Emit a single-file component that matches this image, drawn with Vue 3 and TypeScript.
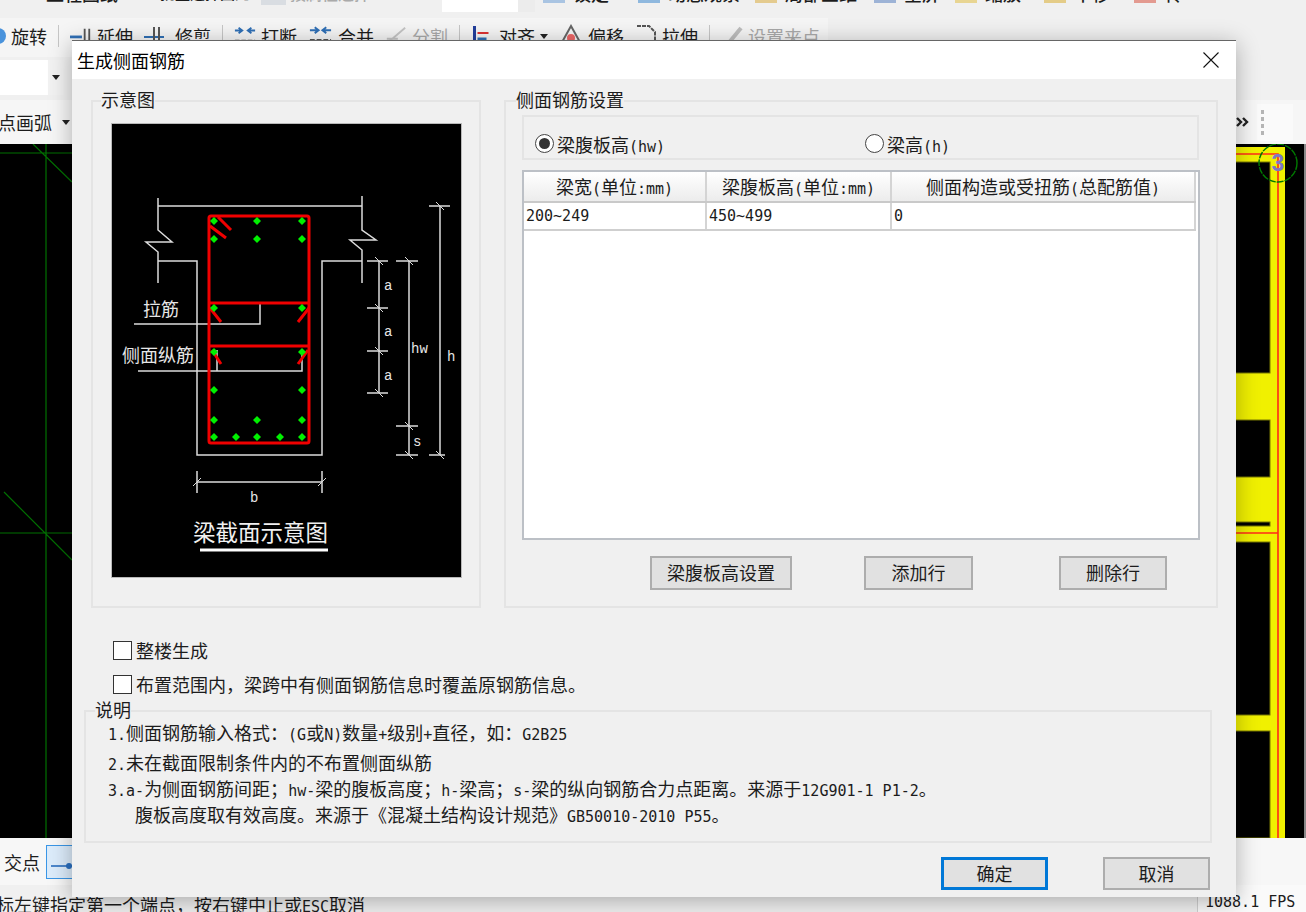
<script setup lang="ts">
const topRight = [
  { label: '锁定', color: '#a9c4e2', width: 95 },
  { label: '动态观察', color: '#8fb8de', width: 117 },
  { label: '局部三维', color: '#e4cb8f', width: 119 },
  { label: '全屏', color: '#9db3d6', width: 81 },
  { label: '缩放', color: '#e8d592', width: 89 },
  { label: '平移', color: '#e4cc88', width: 90 },
  { label: '屏幕旋转', color: '#e39a90', width: 100 },
]

const greenDots = [
  [214, 221], [257, 221], [302, 221],
  [214, 239], [257, 239], [302, 239],
  [214, 308], [302, 308],
  [214, 352], [302, 352],
  [214, 390], [302, 390],
  [214, 420], [257, 420], [302, 420],
  [214, 437], [236, 437], [257, 437], [280, 437], [302, 437],
]

const whitePaths = [
  'M158 198V230L172 242H146L158 252V283',
  'M158 206H362',
  'M362 196V230L376 240H350L362 250V283',
  'M158 261H197V455H322V261H362',
  'M134 324H260V303',
  'M138 371H302V352',
  'M217 350V371',
  'M379 261V393',
  'M367 261H388M367 308H388M367 351H388M367 393H388',
  'M409 261V455',
  'M396 261H418M396 426H418M396 455H418',
  'M440 206V455',
  'M429 206H450M429 455H445',
  'M197 482H322M197 471V493M322 471V493',
]

const tickPaths = [
  'M375 257L383 265M375 304L383 312M375 347L383 355M375 389L383 397',
  'M405 257L413 265M405 422L413 430M405 451L413 459',
  'M436 202L444 210M436 451L444 459',
  'M193 486L201 478M318 486L326 478',
]

const blackGaps = [
  [162, 211], [420, 57], [522, 4], [542, 173], [731, 107],
]
</script>

<template>
  <div class="screen">
    <div class="row-top">
      <span class="row-top__label row-top__label--first">工程图纸</span>
      <span class="row-top__label row-top__label--second">批量选择图元</span>
      <i class="row-top__grey" />
      <span class="row-top__label row-top__label--muted">按属性选择</span>
      <div class="row-top__input"><div class="row-top__btn" /></div>
      <div
        v-for="item in topRight"
        :key="item.label"
        class="row-top__tool"
        :style="{ width: item.width + 'px' }"
      >
        <i class="row-top__icon" :style="{ background: item.color }" />
        <span>{{ item.label }}</span>
      </div>
    </div>

    <div class="row-edit">
      <div class="tool">
        <svg width="6" height="18" viewBox="0 0 6 18"><circle cx="-2" cy="9" r="8" fill="#4a93dc" /></svg>
        <span>旋转</span>
      </div>
      <i class="sep" />
      <div class="tool">
        <svg width="22" height="22" viewBox="0 0 24 22" fill="none"><path d="M0 12H13" stroke="#2f6fb5" stroke-width="3" /><path d="M16 3V20M21 3V20" stroke="#555" stroke-width="2" /></svg>
        <span>延伸</span>
      </div>
      <div class="tool">
        <svg width="26" height="22" viewBox="0 0 26 22" fill="none"><path d="M0 12H20" stroke="#2f6fb5" stroke-width="2" /><path d="M10 2V20M15 2V20" stroke="#555" stroke-width="2" /></svg>
        <span>修剪</span>
      </div>
      <i class="sep" />
      <div class="tool">
        <svg width="22" height="22" viewBox="0 0 24 22" fill="none"><path d="M1 5H8M5 2L9 5L5 8M23 5H16M19 2L15 5L19 8" stroke="#2f6fb5" stroke-width="2" /><path d="M1 16H23" stroke="#555" stroke-width="2" stroke-dasharray="5 2" /></svg>
        <span>打断</span>
      </div>
      <div class="tool">
        <svg width="25" height="22" viewBox="0 0 26 22" fill="none"><path d="M2 5H10M7 2L11 5L7 8M24 5H16M19 2L15 5L19 8" stroke="#2f6fb5" stroke-width="2" /><path d="M2 15H24" stroke="#555" stroke-width="2" stroke-dasharray="5 2" /></svg>
        <span>合并</span>
      </div>
      <div class="tool tool--muted">
        <svg width="22" height="22" viewBox="0 0 24 22" fill="none"><path d="M1 20L22 2M2 14H14" stroke="#c4c4c4" stroke-width="2" /></svg>
        <span>分割</span>
      </div>
      <i class="sep" />
      <div class="tool">
        <svg width="23" height="24" viewBox="0 0 20 24" fill="none"><path d="M2 2V23" stroke="#233f9c" stroke-width="3" /><path d="M5 9H16" stroke="#d33" stroke-width="2" /><path d="M5 15H14" stroke="#2f6fb5" stroke-width="3" /></svg>
        <span>对齐</span>
        <i class="caret" />
      </div>
      <div class="tool">
        <svg width="24" height="24" viewBox="0 0 24 24" fill="none"><path d="M12 2L22 20H2Z" stroke="#666" stroke-width="2" /><circle cx="12" cy="14" r="4" fill="#e66" /></svg>
        <span>偏移</span>
      </div>
      <div class="tool">
        <svg width="22" height="24" viewBox="0 0 22 24" fill="none"><path d="M2 2H14L20 8V23" stroke="#555" stroke-width="2" stroke-dasharray="4 1" /></svg>
        <span>拉伸</span>
      </div>
      <i class="sep sep--wide" />
      <div class="tool tool--muted tool--tight">
        <svg width="20" height="22" viewBox="0 0 20 22" fill="none"><path d="M3 20L17 3" stroke="#bdbdbd" stroke-width="4" /></svg>
        <span>设置夹点</span>
      </div>
    </div>

    <div class="row-select">
      <div class="select">
        <div class="select__btn"><i class="caret" /></div>
      </div>
    </div>

    <div class="row-draw">
      <span class="row-draw__label">点画弧</span>
      <i class="caret" />
      <svg class="row-draw__more" width="14" height="12" viewBox="0 0 14 12" fill="none"><path d="M1 2L5 6L1 10M7 2L11 6L7 10" stroke="#222" stroke-width="2.4" /></svg>
      <div class="row-draw__grip"><i /><i /><i /><i /></div>
    </div>

    <div class="canvas">
      <svg class="canvas__svg" viewBox="0 144 1306 694" width="1306" height="694">
        <path d="M0 153H72M46 144V838M0 533H72M33 144L72 182M4 492L72 560" stroke="#007000" stroke-width="1.2" fill="none" />
        <rect x="1200" y="147" width="85" height="691" fill="#f0f000" />
        <rect
          v-for="gap in blackGaps"
          :key="gap[0]"
          x="1200"
          :y="gap[0]"
          width="70"
          :height="gap[1]"
          fill="#000"
          stroke="#777700"
        />
        <path d="M1200 154H1278V838M1200 533H1278" stroke="#ff2a1a" stroke-width="1.6" fill="none" />
        <rect x="1304" y="144" width="2" height="694" fill="#8a8a8a" />
        <circle cx="1278" cy="163" r="19" fill="none" stroke="#007a00" stroke-width="1.4" stroke-dasharray="7 1" />
        <text x="1278" y="171" text-anchor="middle" class="canvas__num">3</text>
      </svg>
    </div>

    <div class="row-bottom">
      <span>交点</span>
      <div class="snap">
        <svg width="44" height="32" viewBox="0 0 44 32" fill="none"><path d="M4 20H36" stroke="#2a6fc0" stroke-width="1.6" /><circle cx="22" cy="20" r="3" fill="#2a6fc0" /></svg>
      </div>
    </div>

    <div class="statusbar">
      <span class="statusbar__text">标左键指定第一个端点，按右键中止或<span class="m">ESC</span>取消</span>
      <span class="statusbar__fps m">1088.1 FPS</span>
    </div>

    <section class="dialog">
      <header class="dialog__title">
        <span>生成侧面钢筋</span>
        <svg class="dialog__close" width="16" height="16" viewBox="0 0 16 16"><path d="M0.5 0.5L15.5 15.5M15.5 0.5L0.5 15.5" stroke="#111" stroke-width="1.1" /></svg>
      </header>

      <div class="dialog__body">
        <div class="groups">
          <div class="group group--left">
            <span class="group__legend">示意图</span>
            <svg class="figure" viewBox="112 124 349 453" width="349" height="453">
              <rect x="112" y="124" width="349" height="453" fill="#000" />
              <path v-for="d in whitePaths" :key="d" :d="d" class="figure__line" />
              <path v-for="d in tickPaths" :key="d" :d="d" class="figure__tick" />
              <g class="figure__red">
                <rect x="209" y="216" width="100" height="227" rx="2" />
                <path d="M209 303H309M209 346H309" />
                <path d="M218 217L231 230M210 226L226 238M210 308L221 322M309 308L298 322M212 350L221 364M308 350L298 364" />
              </g>
              <path
                v-for="dot in greenDots"
                :key="dot.join()"
                :d="`M${dot[0]} ${dot[1] - 4}l4 4l-4 4l-4 -4z`"
                fill="#00f000"
              />
              <text x="143" y="316" class="figure__label">拉筋</text>
              <text x="122" y="362" class="figure__label">侧面纵筋</text>
              <text x="384" y="290" class="figure__mono">a</text>
              <text x="384" y="336" class="figure__mono">a</text>
              <text x="384" y="380" class="figure__mono">a</text>
              <text x="411" y="353" class="figure__mono">hw</text>
              <text x="447" y="361" class="figure__mono">h</text>
              <text x="413" y="446" class="figure__mono">s</text>
              <text x="250" y="502" class="figure__mono">b</text>
              <text x="193" y="541" class="figure__title">梁截面示意图</text>
              <path d="M200 550H328" stroke="#fff" stroke-width="3" />
            </svg>
          </div>

          <div class="group group--right">
            <span class="group__legend">侧面钢筋设置</span>
            <div class="radios">
              <label class="radio radio--wide"><i class="radio__dot radio__dot--on" /><span>梁腹板高<span class="m">(hw)</span></span></label>
              <label class="radio"><i class="radio__dot" /><span>梁高<span class="m">(h)</span></span></label>
            </div>

            <div class="grid-box">
              <table class="grid">
                <colgroup>
                  <col style="width: 182px">
                  <col style="width: 185px">
                  <col style="width: 304px">
                </colgroup>
                <thead>
                  <tr>
                    <th>梁宽<span class="m">(</span>单位<span class="m">:mm)</span></th>
                    <th>梁腹板高<span class="m">(</span>单位<span class="m">:mm)</span></th>
                    <th>侧面构造或受扭筋<span class="m">(</span>总配筋值<span class="m">)</span></th>
                  </tr>
                </thead>
                <tbody>
                  <tr>
                    <td class="m">200~249</td>
                    <td class="m">450~499</td>
                    <td class="m">0</td>
                  </tr>
                </tbody>
              </table>
            </div>

            <div class="group__actions">
              <button class="btn btn--web" type="button">梁腹板高设置</button>
              <button class="btn btn--add" type="button">添加行</button>
              <button class="btn btn--del" type="button">删除行</button>
            </div>
          </div>
        </div>

        <label class="check check--first"><i class="check__box" />整楼生成</label>
        <label class="check"><i class="check__box" />布置范围内，梁跨中有侧面钢筋信息时覆盖原钢筋信息。</label>

        <div class="notes">
          <span class="group__legend">说明</span>
          <p><span class="m">1.</span>侧面钢筋输入格式：<span class="m">(G</span>或<span class="m">N)</span>数量<span class="m">+</span>级别<span class="m">+</span>直径，如：<span class="m">G2B25</span></p>
          <p class="notes__second"><span class="m">2.</span>未在截面限制条件内的不布置侧面纵筋</p>
          <p class="notes__third"><span class="m">3.a-</span>为侧面钢筋间距；<span class="m">hw-</span>梁的腹板高度；<span class="m">h-</span>梁高；<span class="m">s-</span>梁的纵向钢筋合力点距离。来源于<span class="m">12G901-1 P1-2</span>。</p>
          <p class="notes__fourth">腹板高度取有效高度。来源于《混凝土结构设计规范》<span class="m">GB50010-2010 P55</span>。</p>
        </div>

        <footer class="dialog__footer">
          <button class="btn btn--ok" type="button">确定</button>
          <button class="btn btn--cancel" type="button">取消</button>
        </footer>
      </div>
    </section>
  </div>
</template>

<style scoped>
.screen {
  position: relative;
  display: flex;
  flex-direction: column;
  width: 1306px;
  height: 912px;
  overflow: hidden;
  background: #f0f0f0;
  color: #1c1c1c;
  font-family: "Noto Sans CJK SC", sans-serif;
  font-size: 18px;
  line-height: 24px;
}

.m {
  font-family: "DejaVu Sans Mono", "Noto Sans CJK SC", monospace;
  font-size: 15px;
  line-height: 1;
}

.row-top {
  display: flex;
  flex: none;
  align-items: flex-end;
  height: 18px;
  overflow: hidden;
}

.row-top > * {
  flex: none;
  margin-bottom: 13px;
}

.row-top__label {
  font-weight: 500;
}

.row-top__label--first {
  margin-left: 46px;
}

.row-top__label--second {
  width: 101px;
  margin-left: 42px;
  font-size: 15px;
}

.row-top__grey {
  width: 25px;
  height: 14px;
  background: #d9dde2;
}

.row-top__label--muted {
  width: 82px;
  margin-left: 4px;
  color: #aaa;
  font-size: 16px;
}

.row-top__input {
  display: flex;
  justify-content: flex-end;
  width: 93px;
  height: 30px;
  margin: 0 0 6px 70px;
  background: #fff;
}

.row-top__btn {
  width: 17px;
  background: #ececec;
}

.row-top__tool {
  display: flex;
  gap: 8px;
  align-items: flex-end;
  font-weight: 500;
}

.row-top__input + .row-top__tool {
  margin-left: 8px;
}

.row-top__icon {
  width: 22px;
  height: 16px;
  margin-bottom: 2px;
}

.row-edit {
  display: flex;
  flex: none;
  gap: 11px;
  align-items: center;
  width: 828px;
  height: 39px;
  padding-bottom: 3px;
  box-sizing: border-box;
  background: #f5f5f5;
}

.tool {
  display: flex;
  flex: none;
  gap: 5px;
  align-items: center;
}

.tool--muted {
  color: #a9a9a9;
}

.tool--tight {
  gap: 4px;
}

.sep {
  flex: none;
  width: 1px;
  height: 22px;
  background: #c6c6c6;
}

.sep--wide {
  margin-right: 3px;
}

.caret {
  flex: none;
  width: 0;
  height: 0;
  border-top: 5px solid #222;
  border-right: 4px solid transparent;
  border-left: 4px solid transparent;
}

.row-select {
  flex: none;
  height: 43px;
  padding-top: 3px;
  box-sizing: border-box;
}

.select {
  display: flex;
  justify-content: flex-end;
  width: 64px;
  height: 35px;
  background: #fff;
}

.select__btn {
  display: flex;
  align-items: center;
  justify-content: center;
  width: 16px;
  background: #f2f2f2;
}

.row-draw {
  display: flex;
  flex: none;
  align-items: center;
  height: 44px;
  background: #f6f6f6;
}

.row-draw__label {
  margin-left: -2px;
}

.row-draw .caret {
  margin-left: 10px;
}

.row-draw__more {
  margin-left: 1166px;
}

.row-draw__grip {
  display: flex;
  flex-direction: column;
  gap: 3px;
  width: 36px;
  height: 37px;
  margin-left: 7px;
  padding: 6px 0 0 4px;
  box-sizing: border-box;
  background: #fafafa;
}

.row-draw__grip i {
  width: 3px;
  height: 4px;
  background: #b5b5b5;
}

.canvas {
  position: relative;
  flex: 1;
  background: #000;
}

.canvas__svg {
  position: absolute;
  inset: 0;
}

.canvas__num {
  fill: #7c78c6;
  font-family: "Liberation Sans", sans-serif;
  font-size: 23px;
  font-weight: 700;
}

.row-bottom {
  display: flex;
  flex: none;
  gap: 6px;
  align-items: center;
  height: 47px;
  padding-left: 4px;
  box-sizing: border-box;
  background: #f7f7f7;
}

.snap {
  width: 44px;
  height: 34px;
  border: 1.5px solid #3a96e6;
  box-sizing: border-box;
  background: #dcecfb;
}

.statusbar {
  display: flex;
  flex: none;
  justify-content: space-between;
  height: 27px;
  padding-top: 7px;
  box-sizing: border-box;
  background: #f0f0f0;
}

.statusbar__text {
  margin-left: -4px;
}

.statusbar__fps {
  width: 109px;
  margin-top: -7px;
  padding: 10px 0 0 7px;
  border-left: 1px solid #d0d0d0;
  box-sizing: border-box;
  background: #fafafa;
}

.dialog {
  position: absolute;
  top: 40px;
  left: 72px;
  display: flex;
  flex-direction: column;
  width: 1164px;
  height: 857px;
  border-top: 1px solid #666;
  box-sizing: border-box;
  background: #f0f0f0;
  box-shadow: 0 4px 22px rgba(0, 0, 0, 0.3);
}

.dialog__title {
  display: flex;
  flex: none;
  align-items: center;
  justify-content: space-between;
  height: 38px;
  padding: 0 17px 0 5px;
  background: #fff;
  color: #000;
}

.dialog__body {
  display: flex;
  flex: 1;
  flex-direction: column;
  padding: 21px 18px 0 12px;
}

.groups {
  display: flex;
  gap: 23px;
  margin-left: 7px;
}

.group {
  position: relative;
  height: 508px;
  border: 2px solid #e4e4e4;
  box-sizing: border-box;
}

.group--left {
  flex: none;
  width: 390px;
  padding: 22px 0 0 19px;
}

.group--right {
  flex: none;
  width: 714px;
  padding: 13px 0 0 16px;
}

.group__legend {
  position: absolute;
  top: -15px;
  left: 8px;
  padding: 0;
  background: #f0f0f0;
}

.group--right .group__legend {
  left: 10px;
}

.figure {
  display: block;
  outline: 1px solid #b9b9b9;
}

.figure__line {
  fill: none;
  stroke: #dcdcdc;
  stroke-width: 1.5;
}

.figure__tick {
  fill: none;
  stroke: #dcdcdc;
  stroke-width: 1;
}

.figure__red {
  fill: none;
  stroke: #f00000;
  stroke-width: 3;
}

.figure__label {
  fill: #e6e6e6;
  font-size: 18px;
}

.figure__mono {
  fill: #e6e6e6;
  font-family: "Liberation Mono", monospace;
  font-size: 14px;
}

.figure__title {
  fill: #f0f0f0;
  font-size: 22.5px;
}

.radios {
  display: flex;
  align-items: center;
  width: 677px;
  height: 45px;
  padding: 12px 0 0 11px;
  border: 2px solid #e4e4e4;
  box-sizing: border-box;
}

.radio {
  display: flex;
  gap: 3px;
  align-items: center;
}

.radio--wide {
  width: 330px;
  flex: none;
}

.radio__dot {
  position: relative;
  width: 19px;
  height: 19px;
  border: 1.5px solid #444;
  border-radius: 50%;
  box-sizing: border-box;
  background: #fff;
}

.radio__dot--on::after {
  position: absolute;
  inset: 3px;
  border-radius: 50%;
  background: #333;
  content: "";
}

.grid-box {
  width: 678px;
  height: 370px;
  margin-top: 10px;
  padding: 0;
  border: 2px solid #bcc0c6;
  box-sizing: border-box;
  background: #fff;
}

.grid {
  width: 671px;
  table-layout: fixed;
  border-collapse: collapse;
}

.grid th {
  height: 30px;
  padding: 0 0 2px;
  border-right: 2px solid #d4d4d4;
  border-bottom: 2px solid #c9c9c9;
  box-sizing: border-box;
  background: linear-gradient(#fff, #ececec);
  font-weight: 400;
}

.grid td {
  height: 28px;
  padding: 0 0 0 2px;
  border-right: 2px solid #d4d4d4;
  border-bottom: 2px solid #cfcfcf;
  box-sizing: border-box;
}

.group__actions {
  display: flex;
  margin-top: 16px;
  margin-left: 128px;
}

.btn {
  padding: 0 0 2px;
  border: 2px solid #adadad;
  box-sizing: border-box;
  background: #e1e1e1;
  color: #1c1c1c;
  font: inherit;
}

.group__actions .btn {
  height: 34px;
}

.btn--web {
  width: 142px;
}

.btn--add {
  width: 109px;
  margin-left: 72px;
}

.btn--del {
  width: 108px;
  margin-left: 86px;
}

.check {
  display: flex;
  gap: 4px;
  align-items: center;
  height: 20px;
  margin: 14px 0 0 29px;
}

.check--first {
  margin-top: 32px;
}

.check__box {
  width: 19px;
  height: 19px;
  border: 1.5px solid #333;
  box-sizing: border-box;
  background: #fff;
}

.notes {
  position: relative;
  width: 1128px;
  height: 133px;
  margin-top: 16px;
  padding: 8px 0 0 22px;
  border: 2px solid #e4e4e4;
  box-sizing: border-box;
}

.notes .group__legend {
  left: 9px;
}

.notes p {
  margin: 0;
}

.notes__second {
  padding-top: 6px;
}

.notes__third {
  padding-top: 2px;
}

.notes__fourth {
  padding: 2px 0 0 27px;
}

.dialog__footer {
  display: flex;
  gap: 55px;
  justify-content: flex-end;
  margin: 14px 8px 0 0;
}

.dialog__footer .btn {
  width: 107px;
  height: 33px;
}

.btn--ok {
  border: 3px solid #0078d7;
}
</style>

<style>
body {
  background: #f0f0f0;
}
</style>
